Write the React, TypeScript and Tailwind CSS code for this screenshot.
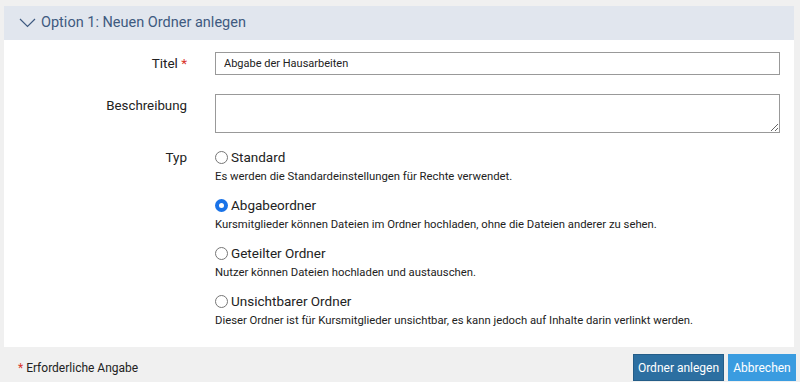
const options = [
  {
    label: "Standard",
    desc: "Es werden die Standardeinstellungen für Rechte verwendet.",
    checked: false
  },
  {
    label: "Abgabeordner",
    desc: "Kursmitglieder können Dateien im Ordner hochladen, ohne die Dateien anderer zu sehen.",
    checked: true
  },
  {
    label: "Geteilter Ordner",
    desc: "Nutzer können Dateien hochladen und austauschen.",
    checked: false
  },
  {
    label: "Unsichtbarer Ordner",
    desc: "Dieser Ordner ist für Kursmitglieder unsichtbar, es kann jedoch auf Inhalte darin verlinkt werden.",
    checked: false
  }
];

const Radio = ({ checked }: { checked: boolean }) =>
  checked ? (
    <span className="w-[13px] h-[13px] rounded-full bg-[#1a73e8] flex items-center justify-center shrink-0">
      <span className="w-[5px] h-[5px] rounded-full bg-white" />
    </span>
  ) : (
    <span className="w-[13px] h-[13px] rounded-full border border-[#767676] bg-white shrink-0" />
  );

export default function App() {
  return (
    <div
      className="w-[800px] h-[382px] bg-[#f0f0f0] pt-[6px] px-[4px] text-[#222]"
      style={{ fontFamily: "Roboto, 'Liberation Sans', sans-serif" }}
    >
      <div className="bg-white w-[790px] h-[341px]">
        <div className="h-[34px] bg-[#e1e6ee] flex items-center pl-[15px] gap-[5px] text-[#3e5a80] text-[14.5px]">
          <svg width="17" height="10" viewBox="0 0 17 10" fill="none">
            <path d="M1 1l7.5 7.5L16 1" stroke="#3e5a80" strokeWidth="1.2" />
          </svg>
          <span>Option 1: Neuen Ordner anlegen</span>
        </div>
        <div className="flex flex-col pt-[12px]">
          <div className="flex items-center h-[23px]">
            <div className="w-[183px] text-right text-[13.5px]">
              Titel <span className="text-[#d9342b]">*</span>
            </div>
            <input
              className="ml-[28px] w-[565px] h-[23px] border border-[#999] px-[8px] text-[11px] outline-none"
              defaultValue="Abgabe der Hausarbeiten"
            />
          </div>
          <div className="flex items-start mt-[19px]">
            <div className="w-[183px] text-right text-[13.3px] leading-[23px]">Beschreibung</div>
            <textarea className="ml-[28px] w-[565px] h-[39px] border border-[#999] outline-none block" />
          </div>
          <div className="flex items-start mt-[14px]">
            <div className="w-[183px] text-right text-[13.5px] leading-[20px]">Typ</div>
            <div className="ml-[28px] flex flex-col gap-[9px]">
              {options.map((o) => (
                <div key={o.label} className="flex flex-col">
                  <label className="flex items-center gap-[3px] text-[13.5px] leading-[20px] h-[20px]">
                    <Radio checked={o.checked} />
                    <span>{o.label}</span>
                  </label>
                  <div className="text-[11.3px] leading-[18px] mt-[1px]">{o.desc}</div>
                </div>
              ))}
            </div>
          </div>
        </div>
      </div>
      <div className="flex items-center justify-between h-[35px] mt-[3px]">
        <div className="pl-[14px] text-[12px]">
          <span className="text-[#d9342b]">*</span> Erforderliche Angabe
        </div>
        <div className="flex gap-[4px]">
          <button className="w-[91px] h-[27px] bg-[#2c6fa1] text-white text-[12px] border border-[#245d88]">
            Ordner anlegen
          </button>
          <button className="w-[68px] h-[27px] bg-[#3a9ce0] text-white text-[12px]">
            Abbrechen
          </button>
        </div>
      </div>
    </div>
  );
}
